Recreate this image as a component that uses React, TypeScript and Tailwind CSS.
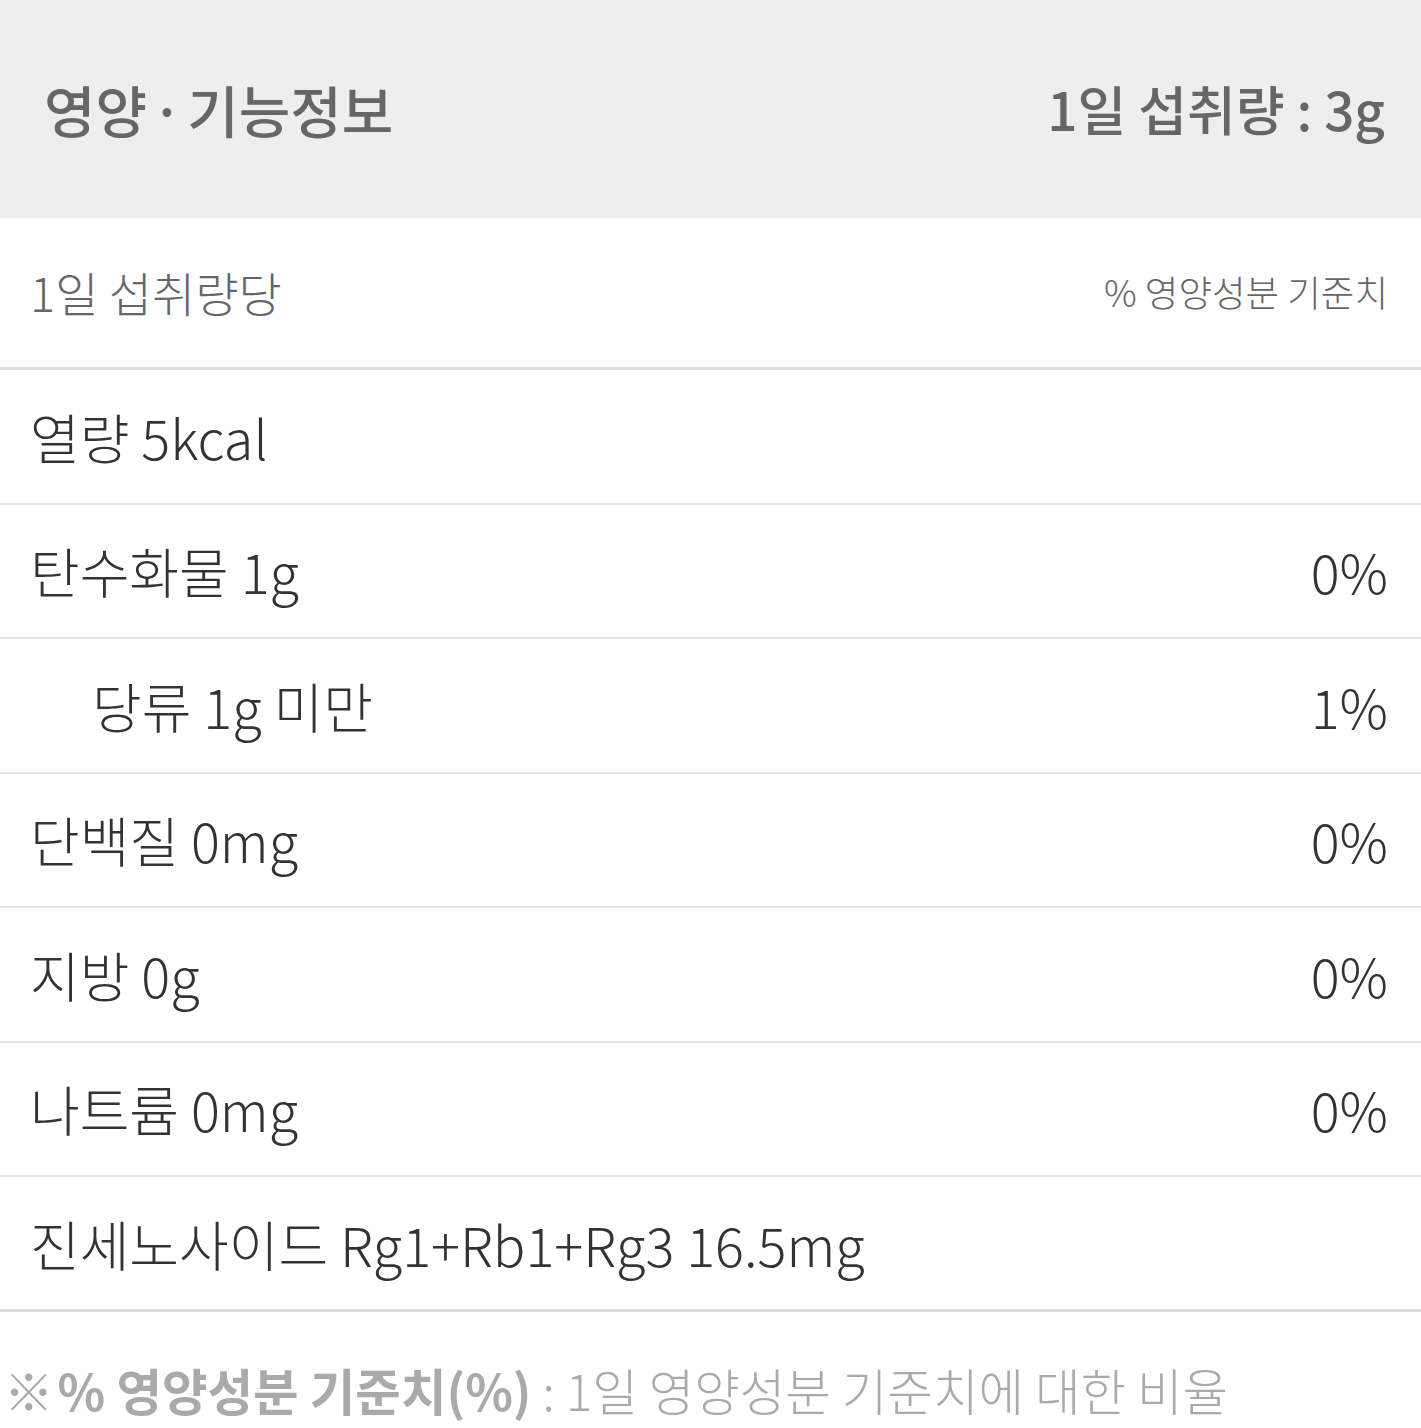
import React from "react";

const rows: { label: string; value?: string; indent?: boolean }[] = [
  { label: "열량 5kcal" },
  { label: "탄수화물 1g", value: "0%" },
  { label: "당류 1g 미만", value: "1%", indent: true },
  { label: "단백질 0mg", value: "0%" },
  { label: "지방 0g", value: "0%" },
  { label: "나트륨 0mg", value: "0%" },
];

export default function App() {
  return (
    <div
      className="w-[1421px] h-[1428px] bg-white overflow-hidden"
      style={{ fontFamily: '"Noto Sans CJK KR", "Noto Sans", sans-serif' }}
    >
      <div className="h-[218px] bg-[#eeeeee] flex items-center justify-between pl-[44px] pr-[36px] text-[#666666] font-medium">
        <span className="text-[56px]">
          영양<span className="mx-[4px]">·</span>기능정보
        </span>
        <span className="text-[53px]">1일 섭취량 : 3g</span>
      </div>
      <div className="h-[152px] border-b-[3px] border-[#dddddd] flex items-center justify-between pl-[30px] pr-[33px] text-[#666666] font-light">
        <span className="text-[47px]">1일 섭취량당</span>
        <span className="text-[36.5px]">% 영양성분 기준치</span>
      </div>
      {rows.map((r, i) => (
        <div
          key={i}
          className="h-[134.5px] border-b-2 border-[#e2e2e2] flex items-center justify-between pl-[30px] pr-[33px] text-[#333333] font-light text-[54px]"
        >
          <span className={r.indent ? "pl-[62px]" : ""}>{r.label}</span>
          {r.value && <span>{r.value}</span>}
        </div>
      ))}
      <div className="h-[135px] border-b-[3px] border-[#dddddd] flex items-center pl-[30px] pr-[33px] text-[#333333] font-light text-[54px]">
        <span>진세노사이드 Rg1+Rb1+Rg3 16.5mg</span>
      </div>
      <div className="flex items-center h-[156px] pl-[4px] text-[#aaaaaa] text-[49.5px]">
        <span className="font-bold">
          ※<span className="ml-[4px]">%</span> 영양성분 기준치(%)
        </span>
        <span className="font-light">&nbsp;: 1일 영양성분 기준치에 대한 비율</span>
      </div>
    </div>
  );
}
